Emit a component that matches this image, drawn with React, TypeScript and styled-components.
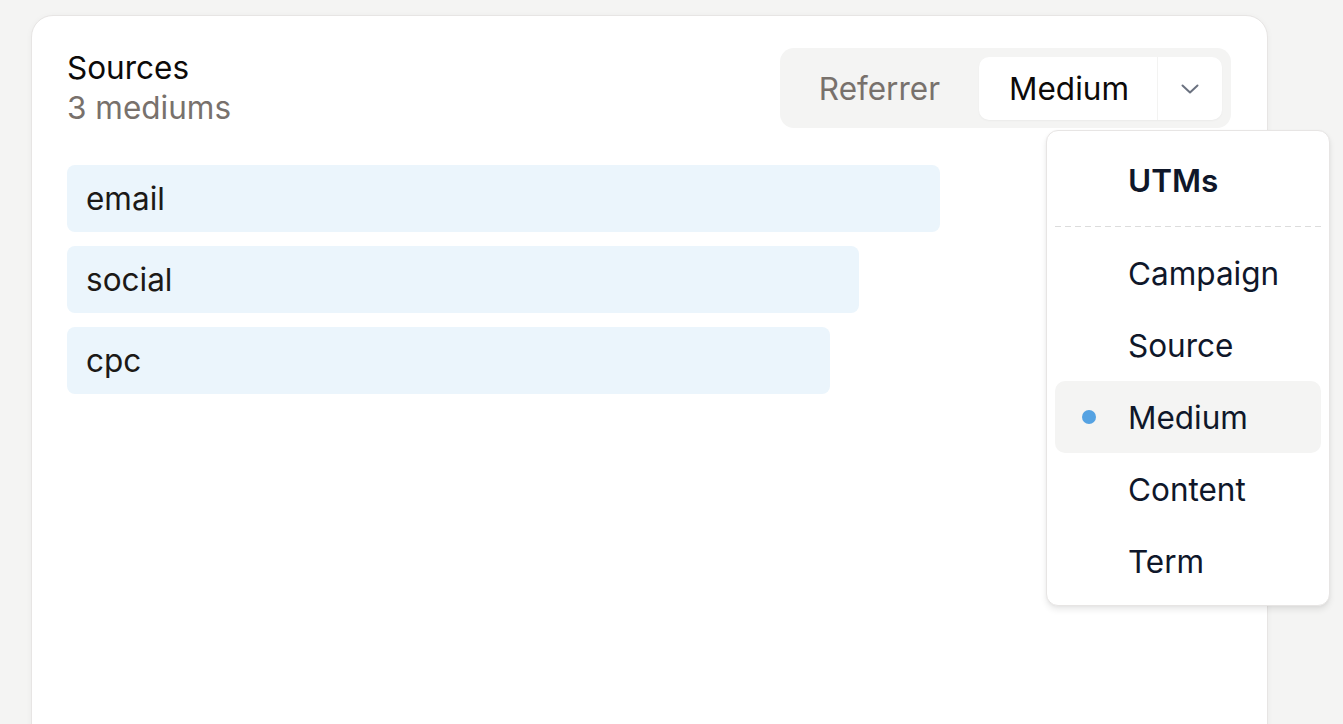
import React from "react";
import styled, { createGlobalStyle } from "styled-components";

const Global = createGlobalStyle`
  html, body { margin: 0; padding: 0; }
  body {
    background: #f4f4f3;
    font-family: Inter, "Noto Sans", sans-serif;
    -webkit-font-smoothing: antialiased;
  }
`;

const FONT = "31.5px";

const Page = styled.div`
  padding: 15px 75px 0 31px;
  box-sizing: border-box;
  overflow: hidden;
  height: 724px;
`;

const Card = styled.section`
  background: #ffffff;
  border: 1px solid #e7e5e4;
  border-radius: 22px;
  box-shadow: 0 1px 6px rgba(0, 0, 0, 0.04);
  padding: 32px 36px 0 35px;
  min-height: 760px;
  box-sizing: border-box;
`;

const Header = styled.div`
  display: flex;
  justify-content: space-between;
  align-items: flex-start;
`;

const TitleBlock = styled.div`
  display: flex;
  flex-direction: column;
`;

const Title = styled.div`
  font-size: ${FONT};
  line-height: 40px;
  color: #0c0a09;
`;

const Subtitle = styled.div`
  font-size: ${FONT};
  line-height: 40px;
  color: #78716c;
`;

const ToggleWrap = styled.div`
  position: relative;
`;

const ToggleGroup = styled.div`
  display: flex;
  gap: 9px;
  background: #f4f4f3;
  border-radius: 14px;
  padding: 9px 9px 8px 9px;
`;

const ToggleButton = styled.div`
  height: 63px;
  display: flex;
  align-items: center;
  padding: 0 30px;
  font-size: ${FONT};
  color: #78716c;
`;

const SelectedPill = styled.div`
  height: 63px;
  display: flex;
  align-items: stretch;
  background: #ffffff;
  border-radius: 10px;
  box-shadow: 0 1px 2px rgba(0, 0, 0, 0.04);
`;

const PillLabel = styled.div`
  display: flex;
  align-items: center;
  padding: 0 28px 0 30px;
  font-size: ${FONT};
  color: #0c0a09;
  border-right: 1px solid #f3f3f2;
`;

const PillChevron = styled.div`
  width: 64px;
  display: flex;
  align-items: center;
  justify-content: center;
  color: #6b7280;
`;

const Menu = styled.div`
  position: absolute;
  top: 82px;
  right: -99px;
  width: 284px;
  box-sizing: border-box;
  background: #ffffff;
  border: 1px solid #e7e5e4;
  border-radius: 12px;
  box-shadow: 0 4px 6px rgba(0, 0, 0, 0.08), 0 1px 3px rgba(0, 0, 0, 0.04);
  padding: 8px;
  z-index: 10;
`;

const MenuHeader = styled.div`
  display: flex;
  align-items: center;
  gap: 32px;
  padding: 22px 0 25px 27px;
  font-size: ${FONT};
  line-height: 40px;
  font-weight: 600;
  color: #0f172a;
`;

const DashedRule = styled.div`
  height: 1px;
  background-image: repeating-linear-gradient(
    to right,
    #dcdcdc 0 6px,
    transparent 6px 10px
  );
  margin-bottom: 10px;
`;

const MenuItem = styled.div<{ $active?: boolean }>`
  display: flex;
  align-items: center;
  gap: 32px;
  height: 72px;
  padding-left: 27px;
  border-radius: 10px;
  font-size: ${FONT};
  color: #0f172a;
  background: ${(p) => (p.$active ? "#f4f4f3" : "transparent")};
`;

const Marker = styled.span<{ $on?: boolean }>`
  width: 14px;
  height: 14px;
  border-radius: 50%;
  flex: none;
  background: ${(p) => (p.$on ? "#55a2e2" : "transparent")};
`;

const Bars = styled.div`
  display: flex;
  flex-direction: column;
  gap: 14px;
  margin-top: 37px;
`;

const Bar = styled.div`
  height: 67px;
  display: flex;
  align-items: center;
  padding-left: 19px;
  box-sizing: border-box;
  background: #ebf5fc;
  border-radius: 8px;
  font-size: ${FONT};
  color: #1c1917;
`;

const rows = [
  { label: "email", width: 873 },
  { label: "social", width: 792 },
  { label: "cpc", width: 763 },
];

const items = ["Campaign", "Source", "Medium", "Content", "Term"];

export default function App() {
  return (
    <>
      <Global />
      <Page>
        <Card>
          <Header>
            <TitleBlock>
              <Title>Sources</Title>
              <Subtitle>3 mediums</Subtitle>
            </TitleBlock>
            <ToggleWrap>
              <ToggleGroup>
                <ToggleButton>Referrer</ToggleButton>
                <SelectedPill>
                  <PillLabel>Medium</PillLabel>
                  <PillChevron>
                    <svg width="18" height="10" viewBox="0 0 18 10" fill="none">
                      <path
                        d="M1.5 1.5L9 8.5L16.5 1.5"
                        stroke="currentColor"
                        strokeWidth="2"
                        strokeLinecap="round"
                        strokeLinejoin="round"
                      />
                    </svg>
                  </PillChevron>
                </SelectedPill>
              </ToggleGroup>
              <Menu>
                <MenuHeader>
                  <Marker />
                  UTMs
                </MenuHeader>
                <DashedRule />
                {items.map((it) => (
                  <MenuItem key={it} $active={it === "Medium"}>
                    <Marker $on={it === "Medium"} />
                    {it}
                  </MenuItem>
                ))}
              </Menu>
            </ToggleWrap>
          </Header>
          <Bars>
            {rows.map((r) => (
              <Bar key={r.label} style={{ width: r.width }}>
                {r.label}
              </Bar>
            ))}
          </Bars>
        </Card>
      </Page>
    </>
  );
}
